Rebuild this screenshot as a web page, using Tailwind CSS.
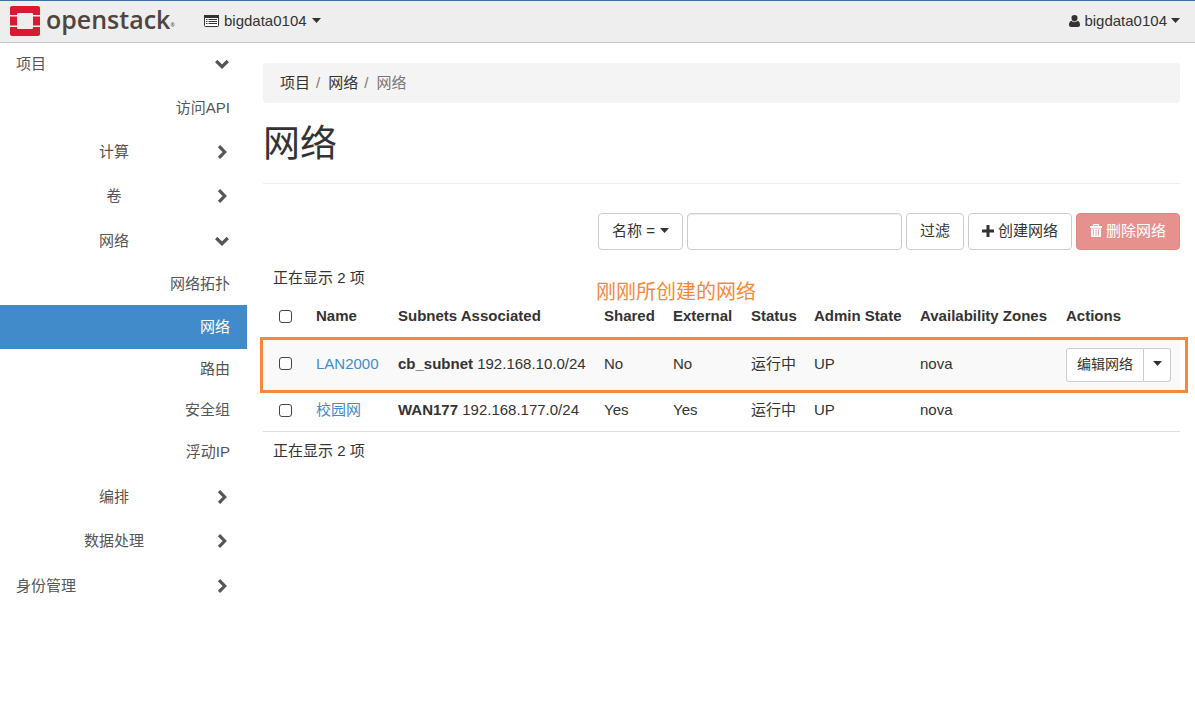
<!DOCTYPE html>
<html lang="zh-CN">
<head>
<meta charset="utf-8">
<title>网络 - OpenStack Dashboard</title>
<script src="https://cdn.jsdelivr.net/npm/@tailwindcss/browser@4"></script>
</head>
<body class="min-h-screen bg-white font-['Liberation_Sans','Noto_Sans_CJK_SC',sans-serif] text-[15px] leading-5 text-[#333]">

<svg class="hidden" aria-hidden="true">
  <symbol id="chevron-down" viewBox="0 0 14 10"><path d="M1.200 2 7 7.700 12.800 2" fill="none" stroke="currentColor" stroke-width="3.200"/></symbol>
  <symbol id="chevron-right" viewBox="0 0 10 14"><path d="M2 1.200 7.700 7 2 12.800" fill="none" stroke="currentColor" stroke-width="3.200"/></symbol>
  <symbol id="caret" viewBox="0 0 9 5"><path d="M0 0h9L4.500 5z" fill="currentColor"/></symbol>
</svg>

<header class="flex h-[43px] items-center justify-between border-t border-b border-t-[#3f6f9f] border-b-[#c8c8c8] bg-[#eee] pr-[15px] pb-[2px] pl-[10px]">
  <div class="flex items-center">
    <a href="#" class="flex w-[194px] items-center gap-[6px]" aria-label="openstack">
      <svg class="size-[30px] shrink-0" viewBox="0 0 30 30" aria-hidden="true">
        <g fill="#da1a32">
          <path d="M2 0h26a2 2 0 0 1 2 2v7h-7V8a1 1 0 0 0-1-1H8a1 1 0 0 0-1 1v1H0V2a2 2 0 0 1 2-2z"/>
          <path d="M0 10.500h7v9H0zM23 10.500h7v9h-7z"/>
          <path d="M0 21h7v1a1 1 0 0 0 1 1h14a1 1 0 0 0 1-1v-1h7v7a2 2 0 0 1-2 2H2a2 2 0 0 1-2-2z"/>
        </g>
      </svg>
      <span class="flex items-end pb-1 font-['Open_Sans',sans-serif] text-[25px] leading-8 font-semibold text-[#4f4540]">openstack<span class="text-[5px] leading-5">®</span></span>
    </a>
    <button type="button" class="flex items-center gap-[5px]">
      <svg class="h-3 w-[15px]" viewBox="0 0 15 12" aria-hidden="true">
        <rect x="0.500" y="0.500" width="14" height="11" rx="1" fill="#fff" stroke="#333"/>
        <path d="M0 0h15v3H0z" fill="#333"/>
        <path d="M2 4.500h1.500M2 6.500h1.500M2 8.500h1.500M4.500 4.500H13M4.500 6.500H13M4.500 8.500H13" stroke="#333"/>
      </svg>
      <span>bigdata0104</span>
      <svg class="h-[5px] w-[9px]" aria-hidden="true"><use href="#caret"/></svg>
    </button>
  </div>
  <button type="button" class="flex items-center gap-1">
    <svg class="h-3 w-[11px]" viewBox="0 0 11 12" aria-hidden="true"><path d="M5.500 0a3 3 0 0 1 3 3.200c0 1.700-1.300 3.300-3 3.300s-3-1.600-3-3.300a3 3 0 0 1 3-3.200zM2.500 5.800c.8 1 1.800 1.400 3 1.400s2.200-.4 3-1.400C10.300 6.200 11 7.800 11 10c0 1.200-.8 2-2 2H2c-1.200 0-2-.8-2-2 0-2.200.7-3.800 2.500-4.200z" fill="#333"/></svg>
    <span>bigdata0104</span>
    <svg class="h-[5px] w-[9px]" aria-hidden="true"><use href="#caret"/></svg>
  </button>
</header>

<div class="flex">
  <nav class="w-[247px] shrink-0 text-[#555]">
    <a href="#" class="flex h-[42px] items-center pr-[15px] pl-4"><span class="flex-1">项目</span><span class="flex w-5 justify-center"><svg class="h-[10px] w-[14px]" aria-hidden="true"><use href="#chevron-down"/></svg></span></a>
    <a href="#" class="flex h-[45px] items-center justify-end pr-[17px]">访问API</a>
    <a href="#" class="flex h-[44px] items-center pr-[15px] pl-4"><span class="flex-1 text-center">计算</span><span class="flex w-5 justify-center"><svg class="h-[14px] w-[10px]" aria-hidden="true"><use href="#chevron-right"/></svg></span></a>
    <a href="#" class="flex h-[44px] items-center pr-[15px] pl-4"><span class="flex-1 text-center">卷</span><span class="flex w-5 justify-center"><svg class="h-[14px] w-[10px]" aria-hidden="true"><use href="#chevron-right"/></svg></span></a>
    <a href="#" class="flex h-[45px] items-center pr-[15px] pl-4"><span class="flex-1 text-center">网络</span><span class="flex w-5 justify-center"><svg class="h-[10px] w-[14px]" aria-hidden="true"><use href="#chevron-down"/></svg></span></a>
    <ul class="pb-[2px]">
      <li><a href="#" class="flex h-[42px] items-center justify-end pr-[17px]">网络拓扑</a></li>
      <li><a href="#" aria-current="page" class="flex h-[44px] items-center justify-end bg-[#428bca] pr-[17px] text-white">网络</a></li>
      <li><a href="#" class="flex h-[40px] items-center justify-end pr-[17px]">路由</a></li>
      <li><a href="#" class="flex h-[42px] items-center justify-end pr-[17px]">安全组</a></li>
      <li><a href="#" class="flex h-[42px] items-center justify-end pr-[17px]">浮动IP</a></li>
    </ul>
    <a href="#" class="flex h-[44px] items-center pr-[15px] pl-4"><span class="flex-1 text-center">编排</span><span class="flex w-5 justify-center"><svg class="h-[14px] w-[10px]" aria-hidden="true"><use href="#chevron-right"/></svg></span></a>
    <a href="#" class="flex h-[44px] items-center pr-[15px] pl-4"><span class="flex-1 text-center">数据处理</span><span class="flex w-5 justify-center"><svg class="h-[14px] w-[10px]" aria-hidden="true"><use href="#chevron-right"/></svg></span></a>
    <a href="#" class="flex h-[45px] items-center pr-[15px] pl-4"><span class="flex-1">身份管理</span><span class="flex w-5 justify-center"><svg class="h-[14px] w-[10px]" aria-hidden="true"><use href="#chevron-right"/></svg></span></a>
  </nav>

  <main class="min-w-0 flex-1 pt-5 pr-[15px] pl-4">
    <ol class="flex rounded bg-[#f4f4f4] px-[17px] py-[10px]">
      <li><a href="#">项目</a><span class="px-[6px] text-[#777]">/</span></li>
      <li class="pl-[2px]"><a href="#">网络</a><span class="px-[6px] text-[#777]">/</span></li>
      <li class="pl-[2px] text-[#777]">网络</li>
    </ol>

    <h1 class="mt-[17px] border-b border-[#eee] pb-[13px] text-[37px] leading-[50px]">网络</h1>

    <form class="mt-[29px] flex justify-end gap-1">
      <button type="button" class="flex h-[37px] items-center gap-[5px] rounded border border-[#ccc] px-[13px] pb-[2px]"><span>名称&nbsp;=</span><svg class="h-[5px] w-[9px]" aria-hidden="true"><use href="#caret"/></svg></button>
      <input type="text" aria-label="过滤条件" class="h-[37px] w-[215px] rounded border border-[#ccc] px-3 shadow-[inset_0_1px_1px_rgba(0,0,0,0.075)]">
      <button type="button" class="h-[37px] rounded border border-[#ccc] px-[13px] pb-[2px]">过滤</button>
      <button type="button" class="flex h-[37px] items-center gap-1 rounded border border-[#ccc] px-[13px] pb-[2px]">
        <svg class="size-3" viewBox="0 0 12 12" aria-hidden="true"><path d="M4.500 0h3v4.500H12v3H7.500V12h-3V7.500H0v-3h4.500z" fill="#333"/></svg>创建网络
      </button>
      <button type="button" class="flex h-[37px] items-center gap-1 rounded border border-[#e08783] bg-[#e6918e] px-[13px] pb-[2px] text-white">
        <svg class="h-[13px] w-3" viewBox="0 0 12 13" aria-hidden="true"><path d="M3 2V1a1 1 0 0 1 1-1h4a1 1 0 0 1 1 1v1h3v2H0V2zM4.200 2h3.600V1.200H4.200z" fill="#fff" fill-rule="evenodd"/><path d="M1 4.500h10V12a1 1 0 0 1-1 1H2a1 1 0 0 1-1-1z" fill="#fff"/><path d="M3.500 5.500v6M6 5.500v6M8.500 5.500v6" stroke="#e6918e" stroke-width=".8"/></svg>删除网络
      </button>
    </form>

    <p class="mt-[9px] px-[10px] py-[9px]">正在显示 2 项</p>
    <table class="w-full table-fixed border-b border-[#ddd]">
      <colgroup>
        <col class="w-[45px]"><col class="w-[82px]"><col class="w-[206px]"><col class="w-[69px]"><col class="w-[78px]"><col class="w-[63px]"><col class="w-[106px]"><col class="w-[146px]"><col>
      </colgroup>
      <thead>
        <tr class="h-[42px] text-left whitespace-nowrap">
          <th class="pb-1 pl-4"><input type="checkbox" aria-label="全选" class="block size-[13px] appearance-none rounded-[3px] border border-[#444] bg-white checked:bg-[#428bca]"></th>
          <th class="px-2 pb-1">Name</th>
          <th class="px-2 pb-1">Subnets Associated</th>
          <th class="px-2 pb-1">Shared</th>
          <th class="px-2 pb-1">External</th>
          <th class="px-2 pb-1">Status</th>
          <th class="px-2 pb-1">Admin State</th>
          <th class="px-2 pb-1">Availability Zones</th>
          <th class="px-2 pb-1">Actions</th>
        </tr>
      </thead>
      <tbody class="whitespace-nowrap">
        <tr class="relative h-[51px] bg-[#f9f9f9]">
          <td class="pb-[2px] pl-4">
            <input type="checkbox" aria-label="选择 LAN2000" class="block size-[13px] appearance-none rounded-[3px] border border-[#444] bg-white checked:bg-[#428bca]">
            <span class="pointer-events-none absolute -top-[2px] -right-2 -bottom-[3px] -left-[3px] border-3 border-[#f88839]"></span>
            <span class="pointer-events-none absolute -top-[57px] left-[333px] text-[20px] leading-5 text-[#f88839]">刚刚所创建的网络</span>
          </td>
          <td class="px-2 pb-[2px]"><a href="#" class="text-[#428bca]">LAN2000</a></td>
          <td class="px-2 pb-[2px]"><b>cb_subnet</b> 192.168.10.0/24</td>
          <td class="px-2 pb-[2px]">No</td>
          <td class="px-2 pb-[2px]">No</td>
          <td class="px-2 pb-[2px]">运行中</td>
          <td class="px-2 pb-[2px]">UP</td>
          <td class="px-2 pb-[2px]">nova</td>
          <td class="px-2">
            <div class="flex h-[34px] text-[14px]">
              <button type="button" class="rounded-l-[3px] border border-[#ccc] bg-white px-[10px] pb-[2px]">编辑网络</button>
              <button type="button" aria-label="更多操作" class="flex w-[27px] items-center justify-center rounded-r-[3px] border border-l-0 border-[#ccc] bg-white pb-[2px]"><svg class="h-[5px] w-[9px]" aria-hidden="true"><use href="#caret"/></svg></button>
            </div>
          </td>
        </tr>
        <tr class="h-[41px]">
          <td class="pl-4"><input type="checkbox" aria-label="选择 校园网" class="block size-[13px] appearance-none rounded-[3px] border border-[#444] bg-white checked:bg-[#428bca]"></td>
          <td class="px-2"><a href="#" class="text-[#428bca]">校园网</a></td>
          <td class="px-2"><b>WAN177</b> 192.168.177.0/24</td>
          <td class="px-2">Yes</td>
          <td class="px-2">Yes</td>
          <td class="px-2">运行中</td>
          <td class="px-2">UP</td>
          <td class="px-2">nova</td>
          <td></td>
        </tr>
      </tbody>
    </table>
    <p class="px-[10px] py-[9px]">正在显示 2 项</p>
  </main>
</div>
</body>
</html>
